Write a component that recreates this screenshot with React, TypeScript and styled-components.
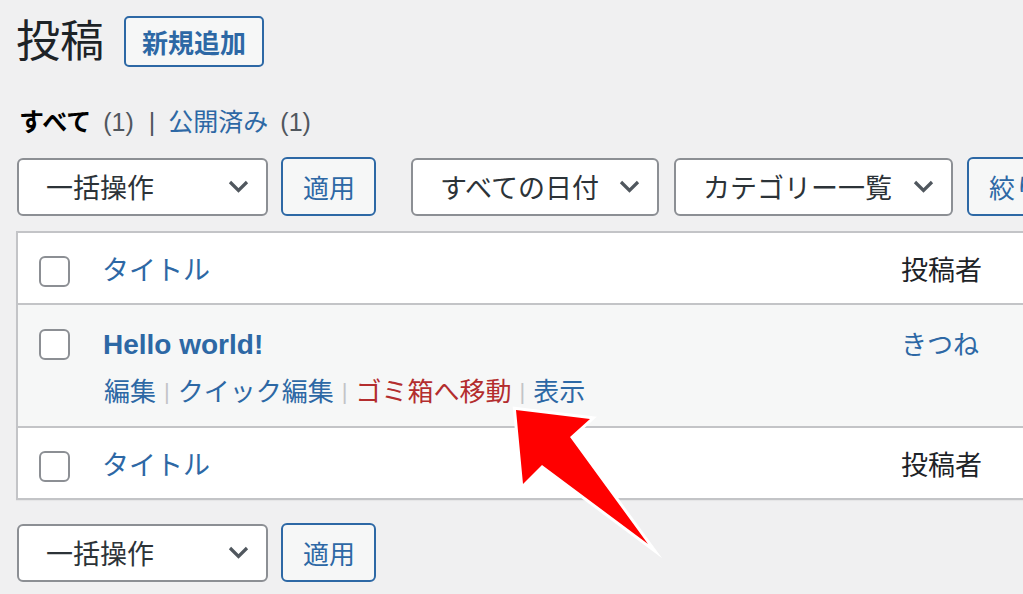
import React from 'react';
import styled, { createGlobalStyle } from 'styled-components';

const GlobalStyle = createGlobalStyle`
  html, body {
    margin: 0;
    padding: 0;
    background: #f0f0f1;
    overflow: hidden;
  }
  body {
    font-family: 'Liberation Sans', 'Noto Sans CJK JP', sans-serif;
    color: #1d2327;
  }
`;

const BLUE = '#2d68a5';
const RED = '#b32d2e';

const Page = styled.div`
  position: relative;
  width: 1023px;
  height: 594px;
  overflow: hidden;
  padding: 16px 0 0 16px;
  box-sizing: border-box;
`;

const HeadingRow = styled.div`
  display: flex;
  align-items: center;
  gap: 20px;
`;

const PageTitle = styled.h1`
  margin: 0;
  font-size: 44px;
  line-height: 51px;
  font-weight: 400;
  color: #1d2327;
`;

const AddNewButton = styled.button`
  height: 51px;
  padding: 0 16px;
  border: 2px solid ${BLUE};
  border-radius: 5px;
  background: #f6f7f7;
  color: ${BLUE};
  font-family: inherit;
  font-size: 26px;
  font-weight: 700;
`;

const StatusLinks = styled.ul`
  display: flex;
  align-items: center;
  margin: 37px 0 0 3px;
  padding: 0;
  list-style: none;
  font-size: 25px;
  line-height: 36px;
`;

const StatusItem = styled.li<{ $current?: boolean }>`
  color: ${p => (p.$current ? '#000' : BLUE)};
  font-weight: ${p => (p.$current ? 700 : 400)};
`;

const Count = styled.span`
  color: #50575e;
  font-weight: 400;
  margin-left: 12px;
`;

const StatusDivider = styled.span`
  color: #50575e;
  margin: 0 13px 0 15px;
`;

const NavBar = styled.div<{ $gapTop: number }>`
  display: flex;
  align-items: center;
  margin-top: ${p => p.$gapTop}px;
  margin-left: 1px;
  white-space: nowrap;
`;

const SelectBox = styled.div<{ $width: number; $offset?: number }>`
  display: flex;
  align-items: center;
  justify-content: space-between;
  box-sizing: border-box;
  width: ${p => p.$width}px;
  height: 58px;
  margin-left: ${p => p.$offset ?? 0}px;
  padding: 0 17px 0 27px;
  background: #fff;
  border: 2px solid #8c8f94;
  border-radius: 6px;
  color: #2c3338;
  font-size: 27px;
  flex-shrink: 0;
`;

const ActionButton = styled.button<{ $width: number; $offset: number; $alignLeft?: boolean }>`
  box-sizing: border-box;
  width: ${p => p.$width}px;
  height: 59px;
  margin-left: ${p => p.$offset}px;
  padding: 0 20px;
  border: 2px solid ${BLUE};
  border-radius: 6px;
  background: #f6f7f7;
  color: ${BLUE};
  font-family: inherit;
  font-size: 26px;
  text-align: ${p => (p.$alignLeft ? 'left' : 'center')};
  flex-shrink: 0;
`;

const ListTable = styled.div`
  width: 1200px;
  margin-top: 15px;
  background: #fff;
  border: 2px solid #c3c4c7;
  box-shadow: 0 1px 1px rgba(0, 0, 0, 0.04);
`;

const Row = styled.div<{ $striped?: boolean; $height?: number }>`
  display: grid;
  grid-template-columns: 84px 799px 1fr;
  align-items: ${p => (p.$striped ? 'start' : 'center')};
  box-sizing: border-box;
  height: ${p => p.$height ?? 70}px;
  padding-top: ${p => (p.$striped ? 22 : 5)}px;
  background: ${p => (p.$striped ? '#f6f7f7' : '#fff')};
  & + & {
    border-top: 2px solid #c3c4c7;
  }
`;

const CheckCell = styled.div<{ $nudge: number }>`
  padding-left: 21px;
  margin-top: ${p => p.$nudge}px;
`;

const Checkbox = styled.span`
  display: block;
  width: 31px;
  height: 31px;
  box-sizing: border-box;
  border: 2px solid #8c8f94;
  border-radius: 6px;
  background: #fff;
`;

const ColumnLabel = styled.div<{ $link?: boolean }>`
  font-size: 27px;
  line-height: 36px;
  color: ${p => (p.$link ? BLUE : '#1d2327')};
`;

const PostTitle = styled.div`
  font-size: 28px;
  line-height: 36px;
  font-weight: 700;
  color: ${BLUE};
  padding-left: 1px;
`;

const RowActions = styled.div`
  display: flex;
  align-items: center;
  margin-top: 11px;
  font-size: 26px;
  line-height: 36px;
  padding-left: 2px;
`;

const RowAction = styled.span<{ $danger?: boolean }>`
  color: ${p => (p.$danger ? RED : BLUE)};
`;

const ActionDivider = styled.span`
  color: #c3c4c7;
  font-size: 22px;
  margin: 0 8px;
`;

const AuthorName = styled.div`
  font-size: 26px;
  line-height: 36px;
  color: ${BLUE};
`;

const ArrowLayer = styled.svg`
  position: absolute;
  top: 0;
  left: 0;
  pointer-events: none;
`;

const Chevron = () => (
  <svg width="21" height="13" viewBox="0 0 21 13">
    <polyline points="2,2 10.5,10.5 19,2" fill="none" stroke="#50575e" strokeWidth="3.2" />
  </svg>
);

const Select = ({ label, width, offset }: { label: string; width: number; offset?: number }) => (
  <SelectBox $width={width} $offset={offset}>
    <span>{label}</span>
    <Chevron />
  </SelectBox>
);

const BulkBar = ({ gapTop, withFilters }: { gapTop: number; withFilters?: boolean }) => (
  <NavBar $gapTop={gapTop}>
    <Select label="一括操作" width={251} />
    <ActionButton $width={95} $offset={13}>適用</ActionButton>
    {withFilters && (
      <>
        <Select label="すべての日付" width={248} offset={35} />
        <Select label="カテゴリー一覧" width={279} offset={15} />
        <ActionButton $width={150} $offset={14} $alignLeft>
          絞り込み
        </ActionButton>
      </>
    )}
  </NavBar>
);

const ColumnRow = ({ height, nudge }: { height?: number; nudge: number }) => (
  <Row $height={height}>
    <CheckCell $nudge={nudge}>
      <Checkbox />
    </CheckCell>
    <ColumnLabel $link>タイトル</ColumnLabel>
    <ColumnLabel>投稿者</ColumnLabel>
  </Row>
);

const App: React.FC = () => {
  const actions = [
    { label: '編集' },
    { label: 'クイック編集' },
    { label: 'ゴミ箱へ移動', danger: true },
    { label: '表示' },
  ];

  return (
    <>
      <GlobalStyle />
      <Page>
        <HeadingRow>
          <PageTitle>投稿</PageTitle>
          <AddNewButton>新規追加</AddNewButton>
        </HeadingRow>

        <StatusLinks>
          <StatusItem $current>
            すべて<Count>(1)</Count>
          </StatusItem>
          <StatusDivider>|</StatusDivider>
          <StatusItem>
            公開済み<Count>(1)</Count>
          </StatusItem>
        </StatusLinks>

        <BulkBar gapTop={17} withFilters />

        <ListTable>
          <ColumnRow nudge={1} />
          <Row $striped $height={123}>
            <CheckCell $nudge={2}>
              <Checkbox />
            </CheckCell>
            <div>
              <PostTitle>Hello world!</PostTitle>
              <RowActions>
                {actions.map((a, i) => (
                  <React.Fragment key={a.label}>
                    {i > 0 && <ActionDivider>|</ActionDivider>}
                    <RowAction $danger={a.danger}>{a.label}</RowAction>
                  </React.Fragment>
                ))}
              </RowActions>
            </div>
            <AuthorName>きつね</AuthorName>
          </Row>
          <ColumnRow height={72} nudge={2} />
        </ListTable>

        <BulkBar gapTop={23} />

        <ArrowLayer width="1023" height="594" viewBox="0 0 1023 594">
          <polygon
            points="516,410 590,419 570,437 648,544 542,465 523,484"
            fill="#ff0000"
            stroke="#ffffff"
            strokeWidth="6"
            strokeLinejoin="miter"
            strokeMiterlimit="8"
            paintOrder="stroke"
          />
        </ArrowLayer>
      </Page>
    </>
  );
};

export default App;
